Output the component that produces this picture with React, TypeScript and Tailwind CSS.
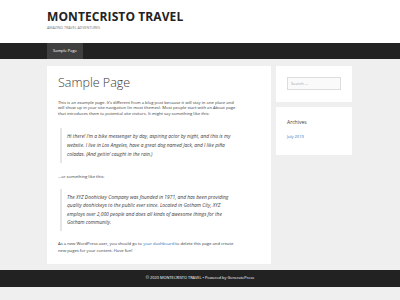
import React from 'react';

const font = { fontFamily: '"Open Sans", "Liberation Sans", sans-serif' };

const Quote: React.FC<{ lines: string[]; lh: string }> = ({ lines, lh }) => (
  <blockquote className={`border-l-[2px] border-[#e6e6e6] pl-[5px] py-[4px] text-[4.9px] italic text-[#3a3a3a] ${lh}`}>
    {lines.map((l, i) => (
      <span key={i} className="block whitespace-nowrap">{l}</span>
    ))}
  </blockquote>
);

export default function App() {
  return (
    <div className="min-h-[300px] w-[400px] bg-[#efefef] text-[#3a3a3a]" style={font}>
      <header className="h-[43px] bg-white pl-[47px] pt-[10px]">
        <h1 className="text-[12px] leading-[14px] font-bold text-[#222222] tracking-[0.1px]">MONTECRISTO TRAVEL</h1>
        <p className="mt-[1px] text-[3.6px] leading-[5px] text-[#757575] uppercase">Amazing travel adventures</p>
      </header>

      <nav className="h-[16px] bg-[#222222] pl-[47px] flex">
        <a className="h-full px-[6px] bg-[#3f3f3f] text-white text-[4px] flex items-center">Sample Page</a>
      </nav>

      <div className="ml-[47px] w-[306px] mt-[7px] flex gap-[5px] items-start">
        <main className="w-[224px] bg-white pl-[11px] pt-[9px] pb-[9px]">
          <h2 className="text-[12.5px] leading-[16px] font-light text-[#3a3a3a]">Sample Page</h2>
          <p className="mt-[9px] text-[4.2px] leading-[5.4px] text-[#3a3a3a]">
            <span className="block whitespace-nowrap">This is an example page. It’s different from a blog post because it will stay in one place and</span>
            <span className="block whitespace-nowrap">will show up in your site navigation (in most themes). Most people start with an About page</span>
            <span className="block whitespace-nowrap">that introduces them to potential site visitors. It might say something like this:</span>
          </p>
          <div className="mt-[12px] ml-[2px]">
            <Quote
              lh="leading-[9px]"
              lines={[
                'Hi there! I’m a bike messenger by day, aspiring actor by night, and this is my',
                'website. I live in Los Angeles, have a great dog named Jack, and I like piña',
                'coladas. (And gettin’ caught in the rain.)',
              ]}
            />
          </div>
          <p className="mt-[11px] text-[4.2px] leading-[5.4px]">…or something like this:</p>
          <div className="mt-[9px] ml-[2px]">
            <Quote
              lh="leading-[8.6px]"
              lines={[
                'The XYZ Doohickey Company was founded in 1971, and has been providing',
                'quality doohickeys to the public ever since. Located in Gotham City, XYZ',
                'employs over 2,000 people and does all kinds of awesome things for the',
                'Gotham community.',
              ]}
            />
          </div>
          <p className="mt-[10px] text-[4.2px] leading-[6.8px]">
            <span className="block whitespace-nowrap">
              As a new WordPress user, you should go to <a className="text-[#1e73be]">your dashboard</a> to delete this page and create
            </span>
            <span className="block whitespace-nowrap">new pages for your content. Have fun!</span>
          </p>
        </main>

        <aside className="w-[76px] flex flex-col gap-[5px]">
          <div className="bg-white h-[36px] px-[11px] pt-[11px]">
            <div className="h-[13px] border border-[#dddddd] bg-[#fafafa] pl-[3px] flex items-center text-[4px] text-[#a0a0a0]">Search …</div>
          </div>
          <div className="bg-white h-[48px] px-[11px] pt-[12px]">
            <h3 className="text-[5px] leading-[7px] text-[#3a3a3a]">Archives</h3>
            <a className="block mt-[8px] text-[4px] leading-[5px] text-[#1e73be]">July 2019</a>
          </div>
        </aside>
      </div>

      <footer className="mt-[6px] h-[17px] bg-[#222222] flex items-center justify-center text-[3.9px] text-white">
        © 2020 MONTECRISTO TRAVEL • Powered by GeneratePress
      </footer>
    </div>
  );
}
